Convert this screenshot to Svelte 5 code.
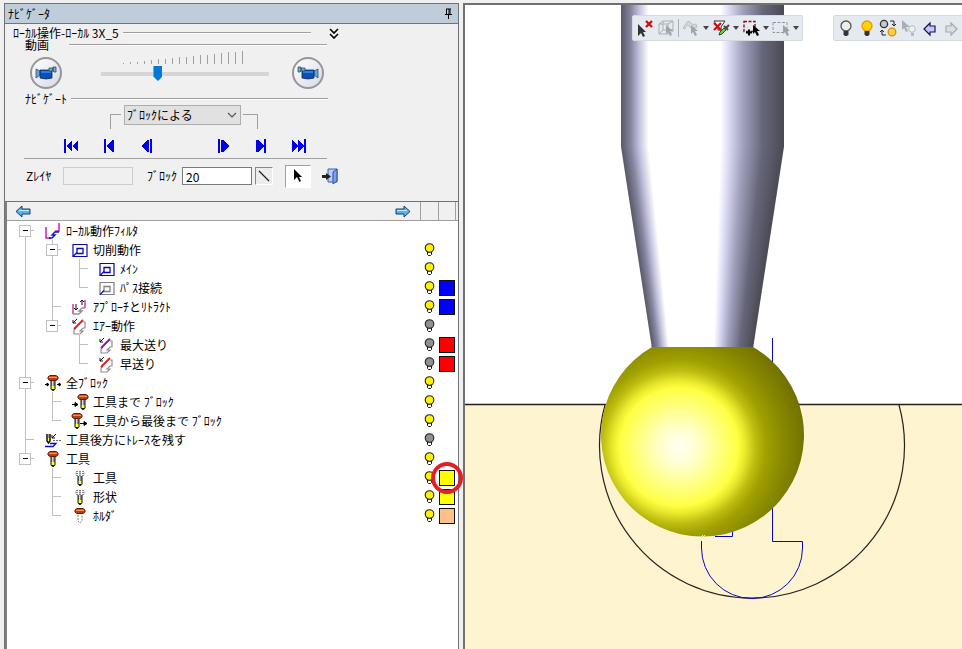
<script>
  const rows = [
    { text: 'ﾛｰｶﾙ動作ﾌｨﾙﾀ', icon: 'filter', guides: ['first'] },
    { text: '切削動作', icon: 'pocket', guides: ['line', 'open'], bulb: 'on' },
    { text: 'ﾒｲﾝ', icon: 'pocket', guides: ['line', 'line', 'tee'], bulb: 'on' },
    { text: 'ﾊﾟｽ接続', icon: 'link', guides: ['line', 'line', 'end'], bulb: 'on', color: '#0000ff' },
    { text: 'ｱﾌﾟﾛｰﾁとﾘﾄﾗｸﾄ', icon: 'approach', guides: ['line', 'tee'], bulb: 'on', color: '#0000ff' },
    { text: 'ｴｱｰ動作', icon: 'air', guides: ['line', 'last'], bulb: 'off' },
    { text: '最大送り', icon: 'feed', guides: ['line', 'none', 'tee'], bulb: 'off', color: '#ff0000' },
    { text: '早送り', icon: 'air', guides: ['line', 'none', 'end'], bulb: 'off', color: '#ff0000' },
    { text: '全ﾌﾞﾛｯｸ', icon: 'allblocks', guides: ['open'], bulb: 'on' },
    { text: '工具まで ﾌﾞﾛｯｸ', icon: 'before', guides: ['line', 'tee'], bulb: 'on' },
    { text: '工具から最後まで ﾌﾞﾛｯｸ', icon: 'after', guides: ['line', 'end'], bulb: 'on' },
    { text: '工具後方にﾄﾚｰｽを残す', icon: 'trace', guides: ['tee'], bulb: 'off' },
    { text: '工具', icon: 'tool', guides: ['last'], bulb: 'on' },
    { text: '工具', icon: 'cutter', guides: ['none', 'tee'], bulb: 'on', color: '#ffff00', marked: true },
    { text: '形状', icon: 'cutter', guides: ['none', 'tee'], bulb: 'on', color: '#ffff00' },
    { text: 'ﾎﾙﾀﾞ', icon: 'holder', guides: ['none', 'end'], bulb: 'on', color: '#ffc08a' }
  ];

  const lines = {
    first: 'M13.5 15V19M19 9.5H22',
    open: 'M13.5 0V4M13.5 15V19M19 9.5H22',
    last: 'M13.5 0V4M19 9.5H22',
    line: 'M13.5 0V19',
    tee: 'M13.5 0V19M13.5 9.5H22',
    end: 'M13.5 0V9.5H22',
    none: ''
  };

  const steps = [
    { label: '最初へ', d: 'M0 0h2v14h-2zM2 7l6-6v12zM8 7l6-6v12z' },
    { label: '前のブロック', d: 'M2 0h2v14h-2zM4 7l6-6h2v12h-2z' },
    { label: '一つ戻る', d: 'M1 7l6-6h2v12h-2zM10 0h2v14h-2z' },
    { label: '一つ進む', d: 'M2 0h2v14h-2zM5 1h2l6 6-6 6h-2z' },
    { label: '次のブロック', d: 'M2 1h2l6 6-6 6h-2zM10 0h2v14h-2z' },
    { label: '最後へ', d: 'M0 1l6 6-6 6zM6 1l6 6-6 6zM12 0h2v14h-2z' }
  ];

  // The tapered shank is drawn as thin bands so that its shading narrows with it.
  const bandCount = 101;
  const bands = Array.from({ length: bandCount }, (_, i) => {
    const inset = (31 * i) / bandCount;
    return { x: 156 + inset, y: 140 + i * 2, w: 163 - inset * 2 };
  });

  const ticks = Array.from({ length: 18 }, (_, i) => i);
  const expandable = (g) => g === 'first' || g === 'open' || g === 'last';
  let speed = $state(33);
  let block = $state('20');
</script>

{#snippet camera()}
  <svg width="22" height="16" viewBox="0 0 22 16" aria-hidden="true">
    <path d="M1 4l4 2v4l-4 3z" fill="#6ba5cc" stroke="#264f78" stroke-width=".8" />
    <path d="M5 5h12v8q-6 2-12 0z" fill="#0b4fb5" stroke="#102c60" stroke-width=".8" />
    <path d="M6 6h10v2h-10z" fill="#2f7de0" />
    <path d="M14 3h4v3h-4zM18 2h3v5h-2l-1-1z" fill="#78aac8" stroke="#284a64" stroke-width=".8" />
  </svg>
{/snippet}

{#snippet bolt(x, head, body)}
  {#if head}
    <path d="M{x - 3} 1.5h6l2 1.500v2l-2 1.500h-6l-2-1.500v-2z" fill="#e05018" stroke="#5c1c08" />
    <path d="M{x - 4} 3.5h8" stroke="#ff9248" />
    <path d="M{x - 4} 5h8" stroke="#8c2c08" />
  {:else}
    <path d="M{x - 4} 2.5h8v4h-8zM{x - 4} 4.5h8M{x} 2v5" fill="#fff" stroke="#888" stroke-dasharray="2 1" />
  {/if}
  {#if body}
    <path d="M{x - 2.5} 7h5v8l-2 2h-1l-2-2z" fill="#111" />
    <path d="M{x - 1.5} 7h3v5h-3z" fill="#8a9094" />
    <path d="M{x - 1} 7h1v5h-1z" fill="#d8dcde" />
    <path d="M{x - 1.5} 12h3v3h-3z" fill="#ffff20" />
  {:else}
    <path d="M{x - 2} 8v6l2 2 2-2v-6" fill="#fff" stroke="#888" stroke-dasharray="2 1" />
  {/if}
{/snippet}

{#snippet treeIcon(name)}
  <svg class="ico" width="18" height="18" viewBox="0 0 18 18" aria-hidden="true">
    {#if name === 'filter'}
      <path d="M2 5v11h5M15 1v8h-4" fill="none" stroke="#c020c0" stroke-width="1.500" />
      <path d="M5 16h3l3-3h-3l3-3h4" fill="none" stroke="#1010c8" stroke-width="1.400" />
    {:else if name === 'pocket' || name === 'link'}
      <path d="M2 3.500h14v12h-14z" fill="#fff" stroke={name === 'pocket' ? '#0808b0' : '#808080'} stroke-width="1.200" />
      <path d="M6 7.500h6v5h-6z" fill="none" stroke={name === 'pocket' ? '#0808b0' : '#808080'} stroke-width="1.300" />
      <path d="M2 15.500l4-4" stroke="#0808e0" stroke-width="1.300" />
    {:else if name === 'approach'}
      <path d="M2 6v10M14 2v8" stroke="#c030b0" stroke-width="1.400" />
      <path d="M2 16h6l3-3h-3l3-3h3" fill="none" stroke="#909090" stroke-width="1.400" />
      <path d="M5 6v6M3 10l2 2 2-2M11 2v5M9 4l2-2 2 2" fill="none" stroke="#111" />
    {:else if name === 'air' || name === 'feed'}
      <path d="M5 11l-2 2v4h6l3-3h-3l3-3h2v-6h-2" fill="none" stroke="#909090" stroke-width="1.200" />
      <path d="M3 12L12 3" stroke={name === 'air' ? '#e01818' : '#9010a0'} stroke-width="1.800" />
      <path d="M6 2L2 6M2 3v3h3" fill="none" stroke="#111" />
    {:else if name === 'allblocks'}
      {@render bolt(9, true, true)}
      <path d="M1 10.500h2M3 9l2 1.500-2 1.500zM13 10.500h2M15 9l2 1.500-2 1.500z" fill="#000" stroke="#000" />
    {:else if name === 'before'}
      {@render bolt(12, true, true)}
      <path d="M1 11.500h4M4 9.500l3 2-3 2z" fill="#000" stroke="#000" />
    {:else if name === 'after'}
      {@render bolt(6, true, true)}
      <path d="M9 11.500h4M13 9.500l3 2-3 2z" fill="#000" stroke="#000" />
    {:else if name === 'trace'}
      <path d="M3 3v7l1.500 2 1.500-2v-7" fill="#ff3" stroke="#111" stroke-width="1.500" />
      <path d="M4 3h1v4h-1z" fill="#999" />
      <path d="M12 3l-4 4M8 4v3h3" fill="none" stroke="#111" />
      <path d="M9 9.500h8" stroke="#666" stroke-dasharray="2 1" />
      <path d="M1 15.500h8l3-3h-6" fill="none" stroke="#0808e0" stroke-width="1.300" />
    {:else if name === 'tool'}
      {@render bolt(9, true, true)}
    {:else if name === 'cutter'}
      {@render bolt(9, false, true)}
    {:else}
      {@render bolt(9, true, false)}
    {/if}
  </svg>
{/snippet}

{#snippet caret()}
  <svg width="6" height="4" viewBox="0 0 6 4" aria-hidden="true"><path d="M0 0h6l-3 4z" fill="#444" /></svg>
{/snippet}

<div class="app">
  <aside class="navigator">
    <header class="title">
      <h1>ﾅﾋﾞｹﾞｰﾀ</h1>
      <button class="plain" aria-label="ピン留め">
        <svg width="9" height="12" viewBox="0 0 9 12"><path d="M2 1h5M2.500 1v5M6 1v5M5 1v5M1 6.500h7M4.500 7v4" fill="none" stroke="#000" /></svg>
      </button>
    </header>

    <section class="controls">
      <div class="group operation">
        <span>ﾛｰｶﾙ操作-ﾛｰｶﾙ 3X_5</span><i></i>
        <button class="plain" aria-label="折りたたむ">
          <svg width="10" height="11" viewBox="0 0 10 11"><path d="M1 1l4 4 4-4M1 6l4 4 4-4" fill="none" stroke="#000" stroke-width="1.600" /></svg>
        </button>
      </div>
      <div class="group movie"><span>動画</span><i></i></div>

      <div class="playback">
        <button class="round" aria-label="逆再生">{@render camera()}</button>
        <div class="speed">
          <svg width="168" height="14" viewBox="0 0 168 14" shape-rendering="crispEdges" aria-hidden="true">
            {#each ticks as i}
              <path d="M{22.5 + i * 7} 13v{-1 - Math.round(i * 0.7)}" stroke="#a0a0a0" />
            {/each}
          </svg>
          <input type="range" min="0" max="100" aria-label="速度" bind:value={speed} />
        </div>
        <button class="round flip" aria-label="再生">{@render camera()}</button>
      </div>

      <div class="group navigate"><span>ﾅﾋﾞｹﾞｰﾄ</span><i></i></div>

      <div class="mode">
        <b class="left"></b>
        <span class="combo">
          <select aria-label="ナビゲート"><option>ﾌﾞﾛｯｸによる</option></select>
          <svg width="10" height="6" viewBox="0 0 10 6" aria-hidden="true"><path d="M1 1l4 4 4-4" fill="none" stroke="#555" stroke-width="1.200" /></svg>
        </span>
        <b class="right"></b>
      </div>

      <div class="steps">
        {#each steps as s, i}
          <button class="plain" class:gap={i === 3} aria-label={s.label}>
            <svg width="14" height="14" viewBox="0 0 14 14" shape-rendering="crispEdges"><path d={s.d} fill="#0000e8" /></svg>
          </button>
        {/each}
      </div>

      <div class="fields">
        <label for="layer">Zﾚｲﾔ</label>
        <input id="layer" type="text" disabled />
        <label class="second" for="block">ﾌﾞﾛｯｸ</label>
        <input id="block" type="text" bind:value={block} />
        <button class="sunken" aria-label="線">
          <svg width="12" height="12" viewBox="0 0 12 12"><path d="M1 1l10 10" stroke="#222" stroke-width="1.200" /></svg>
        </button>
        <button class="pick" aria-label="選択">
          <svg width="10" height="16" viewBox="0 0 10 16"><path d="M1 1v11l3-3 2.500 5 1.500-1-2-4h3z" fill="#000" /></svg>
        </button>
        <button class="plain" aria-label="終了">
          <svg width="18" height="18" viewBox="0 0 18 18">
            <path d="M7 2h9v13h-9z" fill="#b9cdfb" stroke="#3c5cb4" />
            <path d="M12 5l4-3v12l-4 3z" fill="#7ba0f4" stroke="#2c4ca4" />
            <path d="M1 8h4v-2l5 3.500-5 3.500v-2h-4z" fill="#222" />
          </svg>
        </button>
      </div>
    </section>

    <section class="tree">
      <header class="columns">
        <button class="plain" aria-label="前へ">
          <svg width="16" height="13" viewBox="0 0 16 13"><path d="M1 6.500L7 1v3h8v5h-8v3z" fill="#58b4f0" stroke="#123f78" /><path d="M4 5.500h10" stroke="#c4ecff" /></svg>
        </button>
        <button class="plain next" aria-label="次へ">
          <svg width="16" height="13" viewBox="0 0 16 13"><path d="M15 6.500L9 1v3h-8v5h8v3z" fill="#58b4f0" stroke="#123f78" /><path d="M2 5.500h10" stroke="#c4ecff" /></svg>
        </button>
        <span class="cell"></span><span class="cell"></span>
      </header>
      <ul>
        {#each rows as r}
          <li>
            {#each r.guides as g}
              <svg class="guide" width="27" height="19" viewBox="0 0 27 19" shape-rendering="crispEdges" aria-hidden="true">
                <path d={lines[g]} fill="none" stroke="#c0c0c0" />
                {#if expandable(g)}
                  <path d="M7.500 4.500h11v11h-11z" fill="#fff" stroke="#c0c0c0" /><path d="M11 9.500h5" stroke="#000" />
                {/if}
              </svg>
            {/each}
            {@render treeIcon(r.icon)}
            <span class="name">{r.text}</span>
            <span class="state">
              {#if r.bulb}
                <svg width="11" height="14" viewBox="0 0 11 14" aria-hidden="true">
                  <path d="M3.500 9h4v2.500l-1 1h-2l-1-1z" fill="#fff" stroke="#111" />
                  <circle cx="5.500" cy="5" r="4.300" fill={r.bulb === 'on' ? '#fff200' : '#909090'} stroke="#222" stroke-width="1.100" />
                </svg>
              {/if}
            </span>
            <span class="state">
              {#if r.color}<span class="swatch" style="background:{r.color}"></span>{/if}
              {#if r.marked}<span class="ring"></span>{/if}
            </span>
          </li>
        {/each}
      </ul>
    </section>
  </aside>

  <main class="view">
    <svg class="scene" viewBox="0 0 497 644" preserveAspectRatio="xMinYMin slice" role="img" aria-label="工具と形状">
      <defs>
        <linearGradient id="steel">
          <stop offset="0" stop-color="#585868" /><stop offset=".06" stop-color="#8585a0" />
          <stop offset=".11" stop-color="#c0c0dc" /><stop offset=".17" stop-color="#fff" />
          <stop offset=".61" stop-color="#fff" /><stop offset=".66" stop-color="#dcdcf6" />
          <stop offset=".75" stop-color="#a0a0bc" /><stop offset=".87" stop-color="#66667a" />
          <stop offset="1" stop-color="#4a4a54" />
        </linearGradient>
        <radialGradient id="ball" gradientUnits="userSpaceOnUse" cx="214" cy="442" r="128">
          <stop offset="0" stop-color="#fffff4" /><stop offset=".14" stop-color="#ffffd0" />
          <stop offset=".46" stop-color="#ffff44" /><stop offset=".52" stop-color="#e8e82c" />
          <stop offset=".6" stop-color="#bcbc10" /><stop offset=".68" stop-color="#a0a000" />
          <stop offset=".82" stop-color="#888800" /><stop offset="1" stop-color="#707000" />
        </radialGradient>
      </defs>
      <path d="M0 400h497v900h-497z" fill="#fff4d0" />
      <path d="M0 399.500h497" stroke="#222" stroke-width="1.400" />
      <path d="M140 400A152.500 152.500 0 1 0 434 400" fill="none" stroke="#28241c" stroke-width="1.200" />
      <path d="M307.500 333V536.500H337.500V543A50.500 50.500 0 0 1 236.500 543V536M250 531.500h17.500v-8" fill="none" stroke="#0808c8" />
      <path d="M156 0H319V141H156z" fill="url(#steel)" />
      {#each bands as b}
        <rect x={b.x} y={b.y} width={b.w} height="2.500" fill="url(#steel)" />
      {/each}
      <path d="M187 342H288A101.500 101.500 0 1 1 187 342z" fill="url(#ball)" />
      <path d="M236 532l2-2M238 532l2-2" stroke="#ffff20" />
    </svg>

    <div class="bars">
      <div class="bar" role="toolbar" aria-label="選択">
        <button class="plain" aria-label="選択解除">
          <svg width="18" height="18" viewBox="0 0 18 18"><path d="M2 5v12l3-3 2 4 2-1-2-4h3z" fill="#333" /><path d="M10 2l6 6M16 2l-6 6" stroke="#cc1010" stroke-width="2.400" /></svg>
        </button>
        <button class="plain" aria-label="立体選択">
          <svg width="18" height="18" viewBox="0 0 18 18"><path d="M2 5h9v10h-9zM2 5l4-3h10l-5 3M16 2v10l-5 3M6 2v9l-4 4M6 11h10" fill="none" stroke="#a8afb4" /><path d="M9 6v9l2-2 2 4 2-1-2-4h3z" fill="#a0a6aa" /></svg>
        </button>
        <i class="sep"></i>
        <button class="plain" aria-label="面選択">
          <svg width="18" height="18" viewBox="0 0 18 18"><path d="M1 9l4-6q2-2 4 1t5 1l1 3-4 2q-2 0-4-3t-4 3z" fill="#d3d8da" stroke="#b8bec2" /><path d="M9 6v9l2-2 2 4 2-1-2-4h3z" fill="#a0a6aa" /></svg>
        </button>
        {@render caret()}
        <button class="plain" aria-label="フィルタ">
          <svg width="18" height="18" viewBox="0 0 18 18"><path d="M2 2h11l-4 6v3h-3v-3z" fill="#fff" stroke="#333" /><path d="M2 4l7 7M9 4l-7 7" stroke="#cc1010" stroke-width="2.200" /><path d="M7 16l1-3 4-4 2 2-4 4z" fill="#5fd63c" stroke="#222" stroke-width=".8" /><path d="M12 7l4 4M14 9l3-3" stroke="#444" stroke-width="2" /></svg>
        </button>
        {@render caret()}
        <button class="plain" aria-label="追加選択">
          <svg width="18" height="18" viewBox="0 0 18 18"><path d="M2 2.500h11v10h-11z" fill="none" stroke="#8c1020" stroke-width="1.400" stroke-dasharray="3 1.500" /><path d="M4 13.500h6M7 10.500v6" stroke="#000" stroke-width="2" /><path d="M11 6v9l2-2 2 4 2-1-2-4h3z" fill="#000" /></svg>
        </button>
        {@render caret()}
        <button class="plain" aria-label="範囲選択">
          <svg width="18" height="18" viewBox="0 0 18 18"><path d="M1 3.500h14v10h-14z" fill="none" stroke="#8e969b" stroke-dasharray="3 1.500" /><path d="M11 6v9l2-2 2 4 2-1-2-4h3z" fill="#9aa0a5" /></svg>
        </button>
        {@render caret()}
      </div>

      <div class="bar" role="toolbar" aria-label="表示">
        <button class="plain" aria-label="非表示">
          <svg width="18" height="18" viewBox="-2 0 18 18"><circle cx="7" cy="7" r="5" fill="#eceeef" stroke="#555" stroke-width="1.300" /><path d="M4.500 12h5v4h-1v1h-3v-1h-1z" fill="#333" /></svg>
        </button>
        <button class="plain" aria-label="表示">
          <svg width="18" height="18" viewBox="-2 0 18 18"><circle cx="7" cy="7" r="5" fill="#ffd400" stroke="#e89800" stroke-width="1.300" /><path d="M4.500 12h5v4h-1v1h-3v-1h-1z" fill="#333" /></svg>
        </button>
        <button class="plain" aria-label="表示切替">
          <svg width="18" height="18" viewBox="0 0 18 18"><circle cx="5" cy="5" r="3.600" fill="#c8c8c8" stroke="#333" stroke-width="1.300" /><circle cx="13" cy="13" r="3.800" fill="#ffd050" stroke="#e08c00" stroke-width="1.300" /><path d="M11 2h4v5M13 5l2 2 2-2M7 16h-4v-5M1 13l2-2 2 2" fill="none" stroke="#222" /></svg>
        </button>
        <button class="plain" aria-label="選択表示">
          <svg width="18" height="18" viewBox="0 0 18 18"><path d="M2 1v10l2-2 2 4 2-1-2-4h4z" fill="#a8aeb2" /><circle cx="12" cy="10" r="3.300" fill="#eef1f3" stroke="#b4babd" /><path d="M11 14h3v3h-3z" fill="#b4babd" /></svg>
        </button>
        <button class="plain" aria-label="戻る">
          <svg width="18" height="18" viewBox="-2 -3 18 18"><path d="M1 7l6-6v3h5v6h-5v3z" fill="#c8c4ff" stroke="#15154c" stroke-width="1.200" /></svg>
        </button>
        <button class="plain" aria-label="進む">
          <svg width="18" height="18" viewBox="-2 -3 18 18"><path d="M13 7l-6-6v3h-5v6h5v3z" fill="#dce0e2" stroke="#a4aaae" stroke-width="1.200" /></svg>
        </button>
        <i class="sep"></i>
      </div>
    </div>
  </main>
</div>

<style>
  :global(body) { margin: 0; }
  .app {
    display: flex;
    height: 100vh;
    box-sizing: border-box;
    padding: 3px 0 0 4px;
    gap: 4px;
    overflow: hidden;
    background: #f0f0f0;
    color: #000;
    font: 12px/12px "Noto Sans CJK JP", sans-serif;
  }
  .app * { box-sizing: border-box; }
  svg { display: block; flex: none; }
  .plain { display: block; border: 0; padding: 0; background: none; }

  .navigator {
    display: flex;
    flex-direction: column;
    flex: none;
    width: 455px;
    border: 1px solid #707478;
    border-bottom: 0;
  }
  .title {
    display: flex;
    align-items: center;
    justify-content: space-between;
    height: 20px;
    padding: 0 5px 0 3px;
    background: #bfcddb;
    border-bottom: 1px solid #707478;
  }
  h1 { margin: 0; font-size: 12px; font-weight: 400; }

  .controls { height: 177px; padding-top: 3px; }
  .group { display: flex; align-items: center; height: 12px; gap: 4px; white-space: nowrap; }
  .group i { flex: 1; height: 2px; border-top: 1px solid #a0a0a0; border-bottom: 1px solid #fff; }
  .operation { width: 334px; padding-left: 8px; }
  .operation .plain { margin-left: 14px; }
  .movie { width: 322px; padding-left: 20px; gap: 20px; }
  .navigate { width: 323px; padding-left: 20px; }
  .playback { display: flex; align-items: center; height: 42px; padding-left: 25px; }
  .round {
    display: grid;
    place-items: center;
    width: 32px;
    height: 32px;
    margin-top: 2px;
    padding: 0;
    border: 2px solid #94969c;
    border-radius: 50%;
    background: linear-gradient(135deg, #fff, #d8dae4);
  }
  .flip svg { transform: scaleX(-1); }
  .speed { align-self: flex-start; width: 168px; margin: 0 23px 0 39px; }
  input[type="range"] {
    appearance: none;
    display: block;
    width: 100%;
    height: 17px;
    margin: 0;
    background: linear-gradient(#d6d6d6, #d6d6d6) center / 100% 4px no-repeat;
  }
  input[type="range"]::-webkit-slider-thumb {
    appearance: none;
    width: 9px;
    height: 15px;
    background: #0078d7;
    clip-path: polygon(0 0, 100% 0, 100% 70%, 50% 100%, 0 70%);
  }
  .mode { display: flex; align-items: flex-start; height: 28px; padding: 0 0 0 105px; }
  .mode b { width: 11px; height: 15px; margin-top: 9px; border-top: 1px solid #a0a0a0; }
  .left { border-left: 1px solid #a0a0a0; margin-right: 3px; }
  .mode .right { width: 15px; border-right: 1px solid #a0a0a0; margin-left: 2px; }
  .combo { display: grid; align-items: center; width: 117px; }
  .combo > * { grid-area: 1 / 1; }
  .combo svg { justify-self: end; margin-right: 4px; pointer-events: none; }
  select {
    appearance: none;
    width: 100%;
    height: 20px;
    padding: 0 2px;
    border: 1px solid #adadad;
    border-radius: 0;
    background: #e1e1e1;
    color: #000;
    font: inherit;
  }
  .steps {
    display: flex;
    align-items: center;
    gap: 24px;
    width: 303px;
    height: 26px;
    margin-left: 19px;
    padding-left: 40px;
    border-bottom: 1px solid #a0a0a0;
  }
  .steps .gap { margin-left: 38px; }
  .fields { display: flex; align-items: center; height: 34px; padding-left: 21px; }
  .fields label { width: 37px; }
  .fields .second { width: 35px; margin-left: 14px; }
  input[type="text"] {
    width: 70px;
    height: 18px;
    padding: 0 3px;
    border: 1px solid #7a7a7a;
    background: #fff;
    color: #000;
    font: inherit;
  }
  input[type="text"]:disabled { border-color: #ccc; background: #f0f0f0; }
  .sunken {
    display: grid;
    place-items: center;
    width: 18px;
    height: 18px;
    margin-left: 3px;
    padding: 0;
    border: 1px solid #888;
    border-right-color: #fff;
    border-bottom-color: #fff;
    background: #ececec;
  }
  .pick {
    display: grid;
    place-items: center;
    width: 26px;
    height: 23px;
    margin: 0 10px 0 12px;
    padding: 0;
    border: 1px solid #fff;
    border-top-color: #a0a0a0;
    border-left-color: #a0a0a0;
    background: #fff;
  }

  .tree { flex: 1; border-top: 1px solid #707070; border-left: 2px solid #808080; background: #fff; }
  .columns { display: flex; align-items: center; height: 19px; padding: 0 2px 0 8px; background: #f0f0f0; border-bottom: 1px solid #a0a0a0; }
  .next { margin: 0 9px 0 auto; }
  .cell { width: 18px; height: 18px; border-left: 1px solid #a0a0a0; }
  .cell:last-child { border-right: 1px solid #a0a0a0; }
  ul { margin: 0; padding: 0 2px 0 5px; list-style: none; }
  li { display: flex; align-items: center; height: 19px; }
  .guide + .ico { margin-left: 5px; }
  .name { flex: 1; margin-left: 4px; white-space: nowrap; }
  .state { position: relative; display: grid; place-items: center; width: 18px; height: 19px; }
  .swatch { width: 16px; height: 16px; border: 1px solid #111; }
  .ring {
    position: absolute;
    z-index: 2;
    left: -7px;
    top: -6px;
    width: 32px;
    height: 32px;
    border: 4px solid #e01f26;
    border-radius: 50%;
  }

  .view { position: relative; flex: 1; min-width: 0; overflow: hidden; background: #fff; border: solid #707070; border-width: 2px 0 0 2px; }
  .scene { width: 100%; height: 100%; }
  .bars { position: absolute; top: 10px; left: 167px; display: flex; gap: 30px; }
  .bar {
    display: flex;
    align-items: center;
    gap: 3px;
    height: 26px;
    padding: 0 3px;
    border: 1px solid #d5dade;
    border-radius: 2px;
    background: #e4eaef;
  }
  .sep { width: 1px; height: 18px; background: #a8aeb3; }
</style>
